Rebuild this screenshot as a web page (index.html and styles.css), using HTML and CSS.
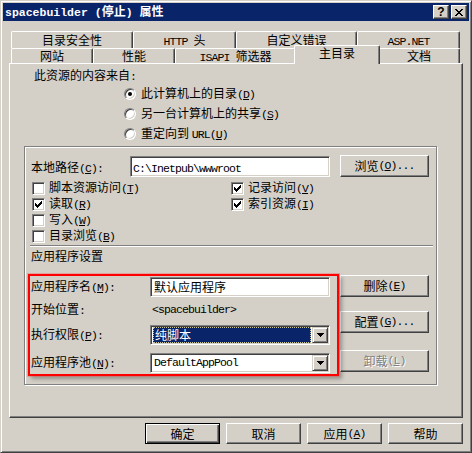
FILE: index.html
```html
<!DOCTYPE html>
<html lang="zh-CN">
<head>
<meta charset="utf-8">
<title>spacebuilder 属性</title>
<link rel="stylesheet" href="styles.css">
</head>
<body>
<div class="dialog">
  <div class="titlebar">
    <span class="title"><span class="m">spacebuilder (</span>停止<span class="m">) </span>属性</span>
    <div class="caption-btns">
      <span class="cbtn help">?</span>
      <span class="cbtn"><svg width="8" height="7" viewBox="0 0 8 7" shape-rendering="crispEdges"><path d="M0 0h2v1h-2z M6 0h2v1h-2z M1 1h2v1h-2z M5 1h2v1h-2z M2 2h4v1h-4z M3 3h2v1h-2z M2 4h4v1h-4z M1 5h2v1h-2z M5 5h2v1h-2z M0 6h2v1h-2z M6 6h2v1h-2z" fill="#000"/></svg></span>
    </div>
  </div>

  <div class="tabs">
    <div class="tabrow back">
      <div class="tab w122">目录安全性</div>
      <div class="tab w103"><span class="m">HTTP </span>头</div>
      <div class="tab w121">自定义错误</div>
      <div class="tab w103"><span class="m">ASP.NET</span></div>
    </div>
    <div class="tabrow front">
      <div class="tab w82">网站</div>
      <div class="tab w82">性能</div>
      <div class="tab w121"><span class="m">ISAPI </span>筛选器</div>
      <div class="tab sel">主目录</div>
      <div class="tab w82">文档</div>
    </div>

    <div class="panel">
      <div class="src-label">此资源的内容来自<span class="m">:</span></div>
      <div class="radios">
        <div class="opt"><span class="radio on"></span><span>此计算机上的目录<span class="m">(<u>D</u>)</span></span></div>
        <div class="opt"><span class="radio"></span><span>另一台计算机上的共享<span class="m">(<u>S</u>)</span></span></div>
        <div class="opt"><span class="radio"></span><span>重定向到 <span class="m">URL(<u>U</u>)</span></span></div>
      </div>

      <div class="group">
        <div class="path-row">
          <span class="path-lbl">本地路径<span class="m">(<u>C</u>):</span></span>
          <div class="field path"><span class="m">C:\Inetpub\wwwroot</span></div>
          <div class="btn side">浏览<span class="m">(<u>O</u>)...</span></div>
        </div>

        <div class="checks">
          <div class="chk"><span class="box"></span><span>脚本资源访问<span class="m">(<u>T</u>)</span></span></div>
          <div class="chk"><span class="box"><svg width="7" height="7" viewBox="0 0 7 7" shape-rendering="crispEdges"><path d="M6 0h1v3h-1z M5 1h1v3h-1z M4 2h1v3h-1z M3 3h1v3h-1z M2 4h1v3h-1z M1 3h1v3h-1z M0 2h1v3h-1z" fill="#000"/></svg></span><span>记录访问<span class="m">(<u>V</u>)</span></span></div>
          <div class="chk"><span class="box"><svg width="7" height="7" viewBox="0 0 7 7" shape-rendering="crispEdges"><path d="M6 0h1v3h-1z M5 1h1v3h-1z M4 2h1v3h-1z M3 3h1v3h-1z M2 4h1v3h-1z M1 3h1v3h-1z M0 2h1v3h-1z" fill="#000"/></svg></span><span>读取<span class="m">(<u>R</u>)</span></span></div>
          <div class="chk"><span class="box"><svg width="7" height="7" viewBox="0 0 7 7" shape-rendering="crispEdges"><path d="M6 0h1v3h-1z M5 1h1v3h-1z M4 2h1v3h-1z M3 3h1v3h-1z M2 4h1v3h-1z M1 3h1v3h-1z M0 2h1v3h-1z" fill="#000"/></svg></span><span>索引资源<span class="m">(<u>I</u>)</span></span></div>
          <div class="chk"><span class="box"></span><span>写入<span class="m">(<u>W</u>)</span></span></div>
          <div></div>
          <div class="chk"><span class="box"></span><span>目录浏览<span class="m">(<u>B</u>)</span></span></div>
          <div></div>
        </div>

        <div class="sep"></div>
        <div class="app-title">应用程序设置</div>

        <div class="app">
          <div class="app-fields">
            <div class="arow ra">
              <span class="lbl">应用程序名<span class="m">(<u>M</u>):</span></span>
              <div class="field text">默认应用程序</div>
            </div>
            <div class="arow rb">
              <span class="lbl">开始位置<span class="m">:</span></span>
              <span class="value m">&lt;spacebuilder&gt;</span>
            </div>
            <div class="arow rc">
              <span class="lbl">执行权限<span class="m">(<u>P</u>):</span></span>
              <div class="field combo">
                <span class="combo-text"><span class="hl">纯脚本</span></span>
                <span class="drop"><svg width="7" height="4" viewBox="0 0 7 4" shape-rendering="crispEdges"><path d="M0 0h7v1h-7z M1 1h5v1h-5z M2 2h3v1h-3z M3 3h1v1h-1z" fill="#000"/></svg></span>
              </div>
            </div>
            <div class="arow rd">
              <span class="lbl">应用程序池<span class="m">(<u>N</u>):</span></span>
              <div class="field combo">
                <span class="combo-text"><span class="plain m">DefaultAppPool</span></span>
                <span class="drop"><svg width="7" height="4" viewBox="0 0 7 4" shape-rendering="crispEdges"><path d="M0 0h7v1h-7z M1 1h5v1h-5z M2 2h3v1h-3z M3 3h1v1h-1z" fill="#000"/></svg></span>
              </div>
            </div>
          </div>
          <div class="app-btns">
            <div class="btn side">删除<span class="m">(<u>E</u>)</span></div>
            <div class="btn side cfg">配置<span class="m">(<u>G</u>)...</span></div>
            <div class="btn side off">卸载<span class="m">(<u>L</u>)</span></div>
          </div>
        </div>
      </div>
    </div>
  </div>

  <div class="actions">
    <div class="btn act def">确定</div>
    <div class="btn act">取消</div>
    <div class="btn act">应用<span class="m">(<u>A</u>)</span></div>
    <div class="btn act">帮助</div>
  </div>
</div>
</body>
</html>
```

FILE: styles.css
```css
* { box-sizing: border-box; }
html, body { margin: 0; padding: 0; }
body {
  width: 472px;
  height: 453px;
  overflow: hidden;
  background: #d4d0c8;
  color: #000;
  font-family: "Noto Sans CJK SC", "Noto Sans", sans-serif;
  font-size: 12px;
}
u { text-decoration: underline; text-underline-offset: 1px; }
.m {
  font-family: "Liberation Mono", "DejaVu Sans Mono", monospace;
  font-size: 11.5px;
  letter-spacing: -0.9px;
}

.dialog {
  width: 472px;
  height: 453px;
  display: flex;
  flex-direction: column;
  padding: 2px;
  background: #d4d0c8;
  border: 1px solid;
  border-color: #d4d0c8 #404040 #404040 #d4d0c8;
  box-shadow: inset 1px 1px 0 #fff, inset -1px -1px 0 #808080;
}

/* title bar */
.titlebar {
  flex: none;
  height: 18px;
  background: #0a246a;
  color: #fff;
  font-weight: bold;
  display: flex;
  align-items: center;
  justify-content: space-between;
  padding: 0 2px;
  line-height: 18px;
}
.title .m { font-size: 11.5px; letter-spacing: 0; font-weight: bold; }
.caption-btns { display: flex; gap: 2px; }
.cbtn {
  width: 16px;
  height: 14px;
  background: #d4d0c8;
  border: 1px solid;
  border-color: #fff #404040 #404040 #fff;
  box-shadow: inset -1px -1px 0 #808080;
  display: flex;
  align-items: center;
  justify-content: center;
  color: #000;
  font-family: "Liberation Sans", sans-serif;
  font-size: 12px;
  font-weight: bold;
  line-height: 12px;
}

/* tabs */
.tabs { margin: 10px 6px 0; }
.tabrow { display: flex; padding-left: 2px; }
.tabrow.back { height: 17px; }
.tabrow.front { height: 15px; position: relative; z-index: 2; }
.tab {
  flex: none;
  background: #d4d0c8;
  border-left: 1px solid #fff;
  border-top: 1px solid #fff;
  border-right: 1px solid #404040;
  box-shadow: inset -1px 0 0 #808080;
  border-radius: 2px 2px 0 0;
  text-align: center;
  white-space: nowrap;
}
.back .tab { height: 17px; line-height: 15px; }
.front .tab { height: 15px; line-height: 13px; }
.front .tab.sel {
  width: 86px;
  height: 19px;
  margin: -3px -2px 0;
  line-height: 14px;
  position: relative;
}
.w82 { width: 82px; }
.w103 { width: 103px; }
.w121 { width: 121px; }
.w122 { width: 122px; }

.panel {
  height: 355px;
  border-left: 1px solid #fff;
  border-top: 1px solid #fff;
  border-right: 1px solid #404040;
  border-bottom: 1px solid #404040;
  box-shadow: inset -1px -1px 0 #808080;
  padding: 4px 0 0 14px;
}

.src-label { margin-left: 10px; height: 14px; line-height: 14px; }
.radios { margin: 2px 0 0 100px; }
.opt { display: flex; align-items: center; gap: 5px; height: 20px; line-height: 16px; }
.radio {
  flex: none;
  position: relative;
  width: 12px;
  height: 12px;
  border-radius: 50%;
  background: #fff;
  border: 1px solid;
  border-color: #808080 #fff #fff #808080;
  box-shadow: inset 1px 1px 0 #404040, inset -1px -1px 0 #d4d0c8;
}
.radio.on::after {
  content: "";
  position: absolute;
  left: 3px;
  top: 3px;
  width: 4px;
  height: 4px;
  border-radius: 50%;
  background: #000;
}

/* group frame */
.group {
  width: 413px;
  margin-top: 2px;
  border: 1px solid #808080;
  box-shadow: inset 1px 1px 0 #fff, 1px 1px 0 #fff;
  padding: 8px 0 7px;
}

.path-row { display: flex; align-items: center; height: 22px; margin-left: 6px; }
.path-lbl { width: 99px; flex: none; }

.field {
  background: #fff;
  border: 1px solid;
  border-color: #808080 #fff #fff #808080;
  box-shadow: inset 1px 1px 0 #404040, inset -1px -1px 0 #d4d0c8;
}
.field.path { width: 200px; height: 21px; padding: 0 2px 0 2px; line-height: 19px; }
.field.text { width: 180px; height: 20px; padding: 0 3px; line-height: 18px; }

.btn {
  background: #d4d0c8;
  border: 1px solid;
  border-color: #fff #404040 #404040 #fff;
  box-shadow: inset -1px -1px 0 #808080;
  display: flex;
  align-items: center;
  justify-content: center;
  white-space: nowrap;
  line-height: 16px;
}
.btn.side { width: 89px; height: 22px; flex: none; }
.path-row .btn.side { margin-left: 10px; }
.btn.off { color: #808080; text-shadow: 1px 1px 0 #fff; }

.checks {
  display: grid;
  grid-template-columns: 199px auto;
  grid-template-rows: 16px 16px 16px 16px;
  margin: 3px 0 0 7px;
}
.chk { display: flex; align-items: center; gap: 4px; line-height: 14px; }
.box {
  flex: none;
  width: 13px;
  height: 13px;
  background: #fff;
  border: 1px solid;
  border-color: #808080 #fff #fff #808080;
  box-shadow: inset 1px 1px 0 #404040, inset -1px -1px 0 #d4d0c8;
  display: flex;
  align-items: center;
  justify-content: center;
}

.sep {
  height: 2px;
  margin: 1px 3px 0 5px;
  border-top: 1px solid #808080;
  border-bottom: 1px solid #fff;
}
.app-title { margin: 2px 0 0 6px; height: 14px; line-height: 14px; }

.app { display: flex; gap: 10px; margin: 12px 0 0 6px; }
.app-fields { width: 299px; position: relative; }
.app-fields::after {
  content: "";
  position: absolute;
  left: -3px;
  right: -9px;
  top: -1px;
  bottom: 1px;
  border: 2px solid #f00;
  box-shadow: 0 0 0 1px rgba(255, 80, 80, 0.35), 3px 3px 4px rgba(0, 0, 0, 0.3);
  pointer-events: none;
}
.arow { display: flex; align-items: center; line-height: 16px; }
.arow.ra { height: 24px; }
.arow.rb { height: 22px; }
.arow.rc { height: 28px; }
.arow.rd { height: 28px; }
.lbl { width: 119px; flex: none; }
.value { padding-left: 2px; }

.combo { width: 180px; height: 20px; display: flex; padding: 1px; }
.combo-text { flex: 1; display: flex; padding: 0 1px; }
.hl {
  flex: 1;
  background: #0a246a;
  color: #fff;
  border: 1px dotted #c8c4a0;
  line-height: 14px;
  padding-left: 1px;
}
.plain { line-height: 16px; padding-left: 1px; }
.drop {
  flex: none;
  width: 16px;
  height: 16px;
  background: #d4d0c8;
  border: 1px solid;
  border-color: #d4d0c8 #404040 #404040 #d4d0c8;
  box-shadow: inset 1px 1px 0 #fff, inset -1px -1px 0 #808080;
  display: flex;
  align-items: center;
  justify-content: center;
}

.app-btns { display: flex; flex-direction: column; width: 89px; }
.app-btns .cfg { margin-top: 14px; }
.app-btns .off { margin-top: 17px; }

/* bottom buttons */
.actions { display: flex; justify-content: flex-end; gap: 6px; margin: 5px 6px 0; }
.btn.act { width: 75px; height: 21px; }
.btn.def {
  border-color: #000;
  box-shadow: inset 1px 1px 0 #fff, inset -1px -1px 0 #404040, inset -2px -2px 0 #808080;
}
```
